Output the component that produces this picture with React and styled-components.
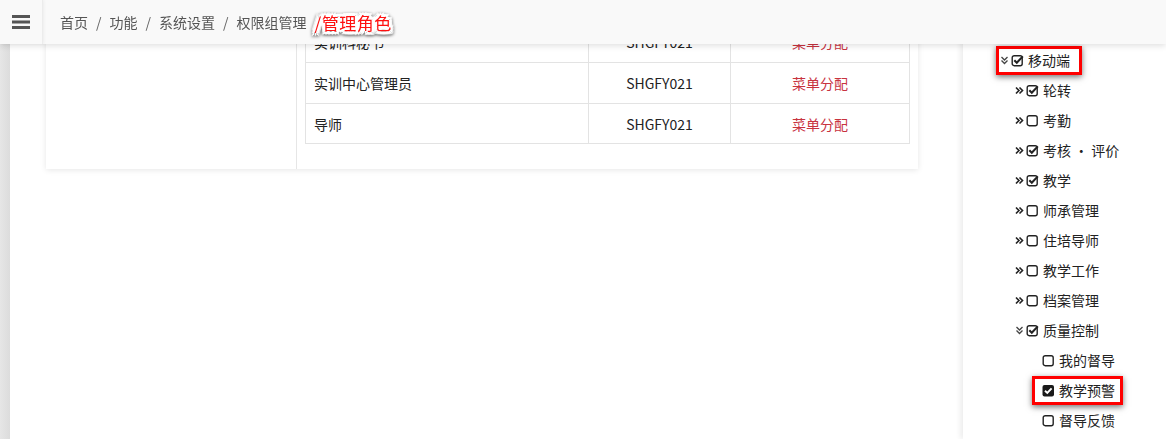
import React from 'react';
import styled, { createGlobalStyle } from 'styled-components';

const GlobalStyle = createGlobalStyle`
  html, body {
    margin: 0;
    padding: 0;
    background: #fff;
    overflow: hidden;
    font-family: "Noto Sans", "Noto Sans CJK SC", sans-serif;
    font-size: 14px;
    color: #333;
  }
  *, *::before, *::after {
    box-sizing: border-box;
  }
`;

const Page = styled.div`
  display: flex;
  height: 439px;
  padding-top: 13px;
`;

const Header = styled.header`
  position: fixed;
  top: 0;
  left: 0;
  right: 0;
  height: 44px;
  display: flex;
  align-items: center;
  background: #f9f9f9;
  box-shadow: 0 2px 6px rgba(0, 0, 0, 0.12);
  z-index: 10;
`;

const MenuToggle = styled.div`
  width: 43px;
  height: 100%;
  display: flex;
  align-items: center;
  justify-content: center;
  border-right: 1px solid #ececec;
  box-shadow: 1px 0 3px rgba(0, 0, 0, 0.05);
`;

const Breadcrumb = styled.nav`
  display: flex;
  align-items: center;
  padding-left: 17px;
  color: #555;
  font-size: 14px;
  font-family: "Noto Sans CJK SC", sans-serif;
`;

const Sep = styled.span`
  padding: 0 8px;
  color: #666;
`;

const Current = styled.span`
  margin-left: 8px;
  color: #ff1010;
  font-size: 17px;
  letter-spacing: 0.5px;
  text-shadow: 2px 0 0 #fff, -2px 0 0 #fff, 0 2px 0 #fff, 0 -2px 0 #fff,
    2px 2px 0 #fff, -2px -2px 0 #fff, 2px -2px 0 #fff, -2px 2px 0 #fff,
    3px 0 1px #fff, -3px 0 1px #fff, 0 3px 1px #fff, 0 -3px 1px #fff,
    3px 3px 1px #fff, -3px 3px 1px #fff, 3px -3px 1px #fff, -3px -3px 1px #fff;
  filter: drop-shadow(0 1px 1.5px rgba(0, 0, 0, 0.7));
`;

const SideStrip = styled.div`
  width: 10px;
  flex: none;
  margin-top: -13px;
  background: linear-gradient(to right, #e6e6e6, #dcdcdc);
`;

const Main = styled.main`
  width: 908px;
  flex: none;
  padding-left: 36px;
`;

const Card = styled.section`
  width: 872px;
  display: flex;
  background: #fff;
  box-shadow: 0 1px 6px rgba(0, 0, 0, 0.1);
`;

const CardAside = styled.div`
  width: 251px;
  border-right: 1px solid #e6e6e6;
`;

const CardBody = styled.div`
  flex: 1;
  padding: 8px 8px 25px;
`;

const Table = styled.table`
  width: 100%;
  border-collapse: collapse;
  font-family: "Noto Sans CJK SC", sans-serif;
`;

const Td = styled.td`
  border: 1px solid #e3e3e3;
  height: ${p => p.$h || 40}px;
  padding: 0 8px;
  text-align: ${p => p.$align || 'left'};
  width: ${p => p.$w || 'auto'};
  color: ${p => (p.$link ? '#c8333f' : '#222')};
`;

const Gap = styled.div`
  width: 45px;
  flex: none;
`;

const TreePanel = styled.aside`
  flex: 1;
  margin-top: -13px;
  padding-top: 45px;
  background: #fff;
  box-shadow: -3px 0 5px rgba(0, 0, 0, 0.07);
  font-family: "Noto Sans CJK SC", sans-serif;
  color: #222;
  white-space: nowrap;
`;

const TreeRow = styled.div`
  height: 30px;
  display: flex;
  align-items: center;
  padding-left: ${p => 33 + p.$level * 15 + (p.$leaf ? 6 : 0)}px;
`;

const Node = styled.span`
  display: inline-flex;
  align-items: center;
  height: 29px;
  gap: 4px;
  padding-left: ${p => (p.$leaf ? 7 : 1)}px;
  padding-right: ${p => (p.$marked ? (p.$leaf ? 5 : 9) : 3)}px;
  border: 3px solid ${p => (p.$marked ? '#f00' : 'transparent')};
  box-shadow: ${p => (p.$marked ? '0 2px 6px rgba(0,0,0,0.55)' : 'none')};
`;

const Arrow = styled.span`
  width: 9px;
  display: inline-flex;
  justify-content: center;
  margin-right: -2px;
`;

const Bars = () => (
  <svg width="18" height="14" viewBox="0 0 18 14">
    <rect x="0" y="0" width="18" height="3" fill="#555" />
    <rect x="0" y="5.5" width="18" height="3" fill="#555" />
    <rect x="0" y="11" width="18" height="3" fill="#555" />
  </svg>
);

const DoubleRight = () => (
  <svg width="9" height="9" viewBox="0 0 9 9">
    <path d="M1 1.5 L4 4.5 L1 7.5 M4.5 1.5 L7.5 4.5 L4.5 7.5" fill="none" stroke="#222" strokeWidth="1.6" />
  </svg>
);

const DoubleDown = () => (
  <svg width="9" height="9" viewBox="0 0 9 9">
    <path d="M1.5 1 L4.5 4 L7.5 1 M1.5 4.5 L4.5 7.5 L7.5 4.5" fill="none" stroke="#444" strokeWidth="1.3" />
  </svg>
);

const Check = ({ state }) => (
  <svg width="13" height="13" viewBox="0 0 13 13">
    {state === 'filled' ? (
      <>
        <rect x="0.5" y="1" width="11.5" height="11.5" rx="2" fill="#1a1a1a" />
        <path d="M3 6.8 L5.3 9 L9.6 4.3" fill="none" stroke="#fff" strokeWidth="1.9" />
      </>
    ) : (
      <>
        <rect x="1.2" y="1.7" width="10" height="10" rx="2" fill="#fff" stroke="#222" strokeWidth="1.4" />
        {state === 'on' && (
          <path d="M3.3 6.3 L5.8 8.8 L11.8 2.4" fill="none" stroke="#222" strokeWidth="2.1" />
        )}
      </>
    )}
  </svg>
);

const tree = [
  { label: '移动端', level: 0, arrow: 'down', check: 'on', marked: true },
  { label: '轮转', level: 1, arrow: 'right', check: 'on' },
  { label: '考勤', level: 1, arrow: 'right', check: 'off' },
  { label: '考核 · 评价', level: 1, arrow: 'right', check: 'on' },
  { label: '教学', level: 1, arrow: 'right', check: 'on' },
  { label: '师承管理', level: 1, arrow: 'right', check: 'off' },
  { label: '住培导师', level: 1, arrow: 'right', check: 'off' },
  { label: '教学工作', level: 1, arrow: 'right', check: 'off' },
  { label: '档案管理', level: 1, arrow: 'right', check: 'off' },
  { label: '质量控制', level: 1, arrow: 'down', check: 'on' },
  { label: '我的督导', level: 2, check: 'off' },
  { label: '教学预警', level: 2, check: 'filled', marked: true },
  { label: '督导反馈', level: 2, check: 'off' },
];

const rows = [
  { name: '实训科秘书', code: 'SHGFY021', h: 41 },
  { name: '实训中心管理员', code: 'SHGFY021', h: 41 },
  { name: '导师', code: 'SHGFY021', h: 40 },
];

export default function App() {
  return (
    <>
      <GlobalStyle />
      <Header>
        <MenuToggle>
          <Bars />
        </MenuToggle>
        <Breadcrumb>
          <span>首页</span>
          <Sep>/</Sep>
          <span>功能</span>
          <Sep>/</Sep>
          <span>系统设置</span>
          <Sep>/</Sep>
          <span>权限组管理</span>
          <Current>/管理角色</Current>
        </Breadcrumb>
      </Header>
      <Page>
        <SideStrip />
        <Main>
          <Card>
            <CardAside />
            <CardBody>
              <Table>
                <tbody>
                  {rows.map(r => (
                    <tr key={r.name}>
                      <Td $h={r.h} $w="283px">{r.name}</Td>
                      <Td $h={r.h} $w="142px" $align="center">{r.code}</Td>
                      <Td $h={r.h} $align="center" $link>菜单分配</Td>
                    </tr>
                  ))}
                </tbody>
              </Table>
            </CardBody>
          </Card>
        </Main>
        <Gap />
        <TreePanel>
          {tree.map(n => (
            <TreeRow key={n.label} $level={n.level} $leaf={!n.arrow}>
              <Node $marked={n.marked} $leaf={!n.arrow}>
                {n.arrow && (
                  <Arrow>{n.arrow === 'down' ? <DoubleDown /> : <DoubleRight />}</Arrow>
                )}
                <Check state={n.check} />
                <span>{n.label}</span>
              </Node>
            </TreeRow>
          ))}
        </TreePanel>
      </Page>
    </>
  );
}
